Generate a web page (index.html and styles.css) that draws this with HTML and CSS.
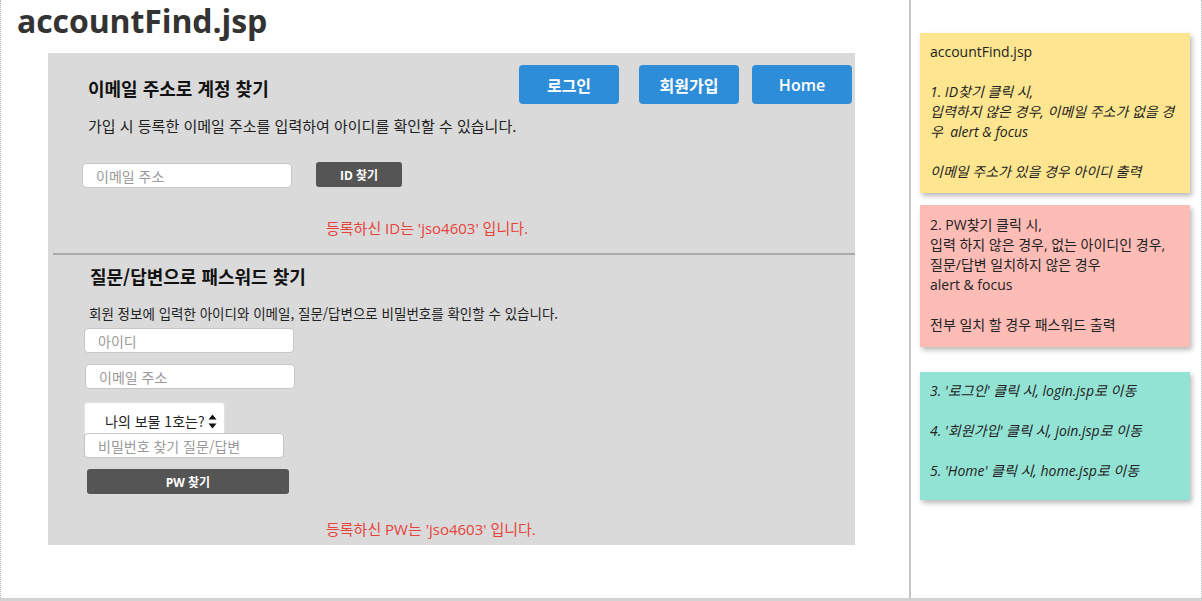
FILE: index.html
```html
<!DOCTYPE html>
<html lang="ko">
<head>
<meta charset="utf-8">
<title>accountFind.jsp</title>
<link rel="stylesheet" href="styles.css">
</head>
<body>
<div class="page">
  <main class="canvas">
    <h1 class="title">accountFind.jsp</h1>
    <div class="panel">
      <section class="find-id">
        <div class="top-row">
          <h2 class="heading">이메일 주소로 계정 찾기</h2>
          <nav class="nav">
            <button class="nav-btn">로그인</button>
            <button class="nav-btn nav-join">회원가입</button>
            <button class="nav-btn nav-home">Home</button>
          </nav>
        </div>
        <p class="desc">가입 시 등록한 이메일 주소를 입력하여 아이디를 확인할 수 있습니다.</p>
        <div class="id-row">
          <input class="field field-email" type="text" placeholder="이메일 주소">
          <button class="dark-btn id-btn">ID 찾기</button>
        </div>
        <p class="result result-id">등록하신 ID는 'jso4603' 입니다.</p>
      </section>
      <hr class="divider">
      <section class="find-pw">
        <h2 class="heading heading-pw">질문/답변으로 패스워드 찾기</h2>
        <p class="desc desc-pw">회원 정보에 입력한 아이디와 이메일, 질문/답변으로 비밀번호를 확인할 수 있습니다.</p>
        <input class="field field-id" type="text" placeholder="아이디">
        <input class="field field-mail2" type="text" placeholder="이메일 주소">
        <div class="select">
          <span class="select-text">나의 보물 1호는?</span>
          <svg class="select-arrows" width="9" height="15" viewBox="0 0 9 15"><path d="M4.5 0.5 L8.5 5.5 L0.5 5.5 Z" fill="#111"/><path d="M0.5 9.5 L8.5 9.5 L4.5 14.5 Z" fill="#111"/></svg>
        </div>
        <input class="field field-answer" type="text" placeholder="비밀번호 찾기 질문/답변">
        <button class="dark-btn pw-btn">PW 찾기</button>
        <p class="result result-pw">등록하신 PW는 'jso4603' 입니다.</p>
      </section>
    </div>
  </main>
  <aside class="notes">
    <div class="note note-yellow">
      <p>accountFind.jsp</p>
      <p class="gap it">1. ID찾기 클릭 시,</p>
      <p class="it">입력하지 않은 경우, 이메일 주소가 없을 경우&nbsp;&nbsp;alert &amp; focus</p>
      <p class="gap it">이메일 주소가 있을 경우 아이디 출력</p>
    </div>
    <div class="note note-pink">
      <p>2. PW찾기 클릭 시,</p>
      <p>입력 하지 않은 경우, 없는 아이디인 경우,</p>
      <p>질문/답변 일치하지 않은 경우</p>
      <p>alert &amp; focus</p>
      <p class="gap">전부 일치 할 경우 패스워드 출력</p>
    </div>
    <div class="note note-teal">
      <p class="it">3. '로그인' 클릭 시, login.jsp로 이동</p>
      <p class="gap it">4. '회원가입' 클릭 시, join.jsp로 이동</p>
      <p class="gap it">5. 'Home' 클릭 시, home.jsp로 이동</p>
    </div>
  </aside>
</div>
</body>
</html>
```

FILE: styles.css
```css
* { box-sizing: border-box; }
html, body { margin: 0; padding: 0; background: #fff; }
body {
  font-family: "Open Sans", "Noto Sans CJK KR", sans-serif;
  color: #222;
}
.page {
  display: flex;
  width: 1202px;
  height: 601px;
  border-bottom: 3px solid #d2d2d2;
  overflow: hidden;
}
.canvas {
  width: 911px;
  flex: none;
  border-left: 1px dotted #b8b8b8;
  border-right: 2px solid #c4c4c4;
  padding-left: 47px;
}
.title {
  margin: 0 0 0 -31px;
  height: 53px;
  font-size: 32px;
  line-height: 42px;
  font-weight: 700;
  color: #333;
  letter-spacing: -0.1px;
}
.panel {
  width: 807px;
  height: 492px;
  background: #dadada;
}
.find-id {
  height: 200px;
  display: flex;
  flex-direction: column;
}
.top-row {
  display: flex;
  align-items: flex-start;
}
.heading {
  margin: 22px 0 0 40px;
  font-family: "Noto Sans CJK KR", sans-serif;
  font-size: 18px;
  line-height: 26px;
  font-weight: 700;
  color: #111;
}
.nav {
  margin: 12px 3px 0 auto;
  display: flex;
}
.nav-btn {
  width: 100px;
  height: 39px;
  border: 0;
  border-radius: 4px;
  background: #2e8dd8;
  color: #fff;
  font-family: "Open Sans", "Noto Sans CJK KR", sans-serif;
  font-size: 16px;
  font-weight: 600;
  padding: 0;
}
.nav-join { margin-left: 20px; }
.nav-home { margin-left: 13px; }
.desc {
  margin: 12px 0 0 40px;
  font-family: "Noto Sans CJK KR", sans-serif;
  font-size: 15px;
  line-height: 20px;
  color: #222;
}
.id-row {
  display: flex;
  align-items: flex-start;
  margin: 26px 0 0 34px;
}
.field {
  display: block;
  height: 25px;
  border: 1px solid #c6c6c6;
  border-radius: 4px;
  background: #fff;
  padding: 0 13px;
  font-family: "Noto Sans CJK KR", sans-serif;
  font-size: 14px;
  color: #333;
  outline: none;
}
.field::placeholder { color: #9a9a9a; }
.field-email { width: 210px; margin-top: 1px; }
.dark-btn {
  border: 0;
  border-radius: 3px;
  background: #555;
  color: #fff;
  font-family: "Open Sans", "Noto Sans CJK KR", sans-serif;
  font-size: 12px;
  font-weight: 700;
  padding: 0;
}
.id-btn { width: 86px; height: 25px; margin-left: 24px; }
.result {
  margin: 0 0 0 278px;
  font-family: "Open Sans", "Noto Sans CJK KR", sans-serif;
  font-size: 15px;
  line-height: 20px;
  color: #e8433a;
}
.result-id { margin-top: auto; margin-bottom: 15px; }
.divider {
  margin: 0 0 0 5px;
  height: 2px;
  border: 0;
  background: #ababab;
}
.find-pw {
  display: flex;
  flex-direction: column;
  align-items: flex-start;
}
.heading-pw { margin: 8px 0 0 42px; }
.desc-pw {
  margin: 15px 0 0 41px;
  font-size: 13.5px;
  line-height: 18px;
}
.field-id { width: 210px; margin: 6px 0 0 36px; }
.field-mail2 { width: 210px; margin: 11px 0 0 37px; }
.select {
  margin: 13px 0 0 36px;
  width: 141px;
  height: 32px;
  background: #fff;
  border: 1px solid #e2e2e2;
  border-bottom: 0;
  border-radius: 4px 4px 0 0;
  display: flex;
  align-items: flex-end;
  padding: 0 7px 3px 20px;
}
.select-text {
  font-family: "Noto Sans CJK KR", sans-serif;
  font-size: 14px;
  line-height: 20px;
  color: #222;
}
.select-arrows { margin: 0 0 2px auto; }
.field-answer { width: 200px; margin: -1px 0 0 36px; }
.pw-btn { width: 202px; height: 25px; margin: 11px 0 0 39px; }
.result-pw { margin-top: 25px; }
.notes {
  flex: 1;
  border-right: 1px dotted #b8b8b8;
  padding: 33px 0 0 9px;
  font-family: "Open Sans", "Noto Sans CJK KR", sans-serif;
  font-size: 14px;
  line-height: 20px;
  color: #222;
}
.note {
  width: 270px;
  padding: 9px 8px 11px 10px;
  box-shadow: 2px 3px 5px rgba(0, 0, 0, 0.28);
}
.note p { margin: 0; }
.note .gap { margin-top: 20px; }
.note .it { font-style: italic; }
.note-yellow { background: #fee58f; height: 160px; }
.note-pink { background: #fdbcb6; height: 142px; margin-top: 12px; padding-top: 10px; }
.note-teal { background: #93e3d5; height: 128px; margin-top: 25px; }
```
